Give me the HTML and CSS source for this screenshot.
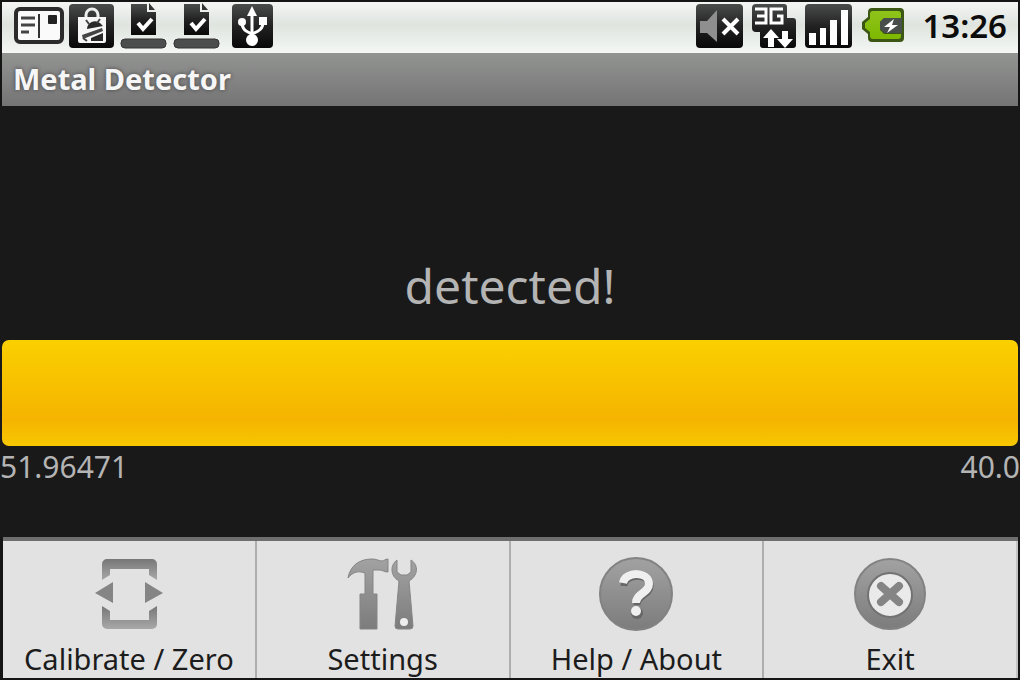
FILE: index.html
```html
<!DOCTYPE html>
<html lang="en">
<head>
    <meta charset="UTF-8">
    <meta name="viewport" content="width=device-width, initial-scale=1.0">
    <title>Metal Detector</title>
    <link rel="stylesheet" href="styles.css">
</head>
<body>
    <!-- shared gradients -->
    <svg class="defs" width="0" height="0" aria-hidden="true">
        <defs>
            <linearGradient id="dark" x1="0" y1="0" x2="0" y2="1">
                <stop offset="0" stop-color="#4a4c4b"/>
                <stop offset="0.5" stop-color="#222"/>
                <stop offset="1" stop-color="#080808"/>
            </linearGradient>
            <linearGradient id="gray" x1="0" y1="0" x2="0" y2="1">
                <stop offset="0" stop-color="#a2a2a2"/>
                <stop offset="1" stop-color="#7c7c7c"/>
            </linearGradient>
            <linearGradient id="frame" x1="0" y1="0" x2="0" y2="1">
                <stop offset="0" stop-color="#777"/>
                <stop offset="1" stop-color="#a8a8a8"/>
            </linearGradient>
            <linearGradient id="green" x1="0" y1="0" x2="0" y2="1">
                <stop offset="0" stop-color="#8fc41c"/>
                <stop offset="1" stop-color="#7eb800"/>
            </linearGradient>
        </defs>
    </svg>

    <header class="status">
        <div class="notifications">
            <svg width="50" height="48" viewBox="0 0 50 48">
                <rect x="2" y="7" width="46" height="33" rx="4" fill="#fafafa" stroke="#2b2b2b" stroke-width="4"/>
                <path d="M25 12v24" stroke="#333" stroke-width="2"/>
                <path d="M7 16h14M7 23h14M7 30h8" stroke="#444" stroke-width="3"/>
                <rect x="34" y="13" width="9" height="9" rx="1" fill="#222"/>
            </svg>
            <svg width="46" height="48" viewBox="0 0 46 48">
                <rect x="0" y="2" width="45" height="44" rx="4" fill="url(#dark)"/>
                <path d="M17 17v-4a6 6 0 0 1 12 0v4" fill="none" stroke="#eee" stroke-width="3"/>
                <path d="M9 15h28v24a2 2 0 0 1-2 2H11a2 2 0 0 1-2-2z" fill="#f6f6f6"/>
                <path d="M13 33l20-7 1 3-20 8z" fill="#444"/>
                <path d="M18 27a8 8 0 0 1 13-6l3 3zM22 36l12-5v8H22z" fill="#2a2a2a"/>
                <path d="M17 18l3 4M31 17l-3 4M14 36l4 3" stroke="#444" stroke-width="2"/>
            </svg>
            <svg width="48" height="48" viewBox="0 0 48 48">
                <path d="M11 2h16v8h9v23H11z" fill="url(#dark)"/>
                <path d="M29 1l6 7h-6z" fill="#333"/>
                <path d="M18 21l5 6 9-10" fill="none" stroke="#fff" stroke-width="4"/>
                <rect x="1" y="37" width="45" height="9" rx="4" fill="#4c4e4d" stroke="#333" stroke-width="1"/>
            </svg>
            <svg width="48" height="48" viewBox="0 0 48 48">
                <path d="M11 2h16v8h9v23H11z" fill="url(#dark)"/>
                <path d="M29 1l6 7h-6z" fill="#333"/>
                <path d="M18 21l5 6 9-10" fill="none" stroke="#fff" stroke-width="4"/>
                <rect x="1" y="37" width="45" height="9" rx="4" fill="#4c4e4d" stroke="#333" stroke-width="1"/>
            </svg>
            <svg class="usb" width="41" height="48" viewBox="0 0 41 48">
                <rect x="0" y="2" width="41" height="44" rx="4" fill="url(#dark)"/>
                <path d="M20 10v30M10 20c0 7 3 9 10 12M31 20c0 7-4 9-11 12" fill="none" stroke="#fff" stroke-width="3"/>
                <path d="M20 4l5 10H15z" fill="#fff"/>
                <circle cx="10" cy="20" r="4" fill="#fff"/>
                <rect x="27" y="15" width="8" height="8" fill="#fff"/>
                <circle cx="20" cy="38" r="6" fill="#fff"/>
            </svg>
        </div>
        <div class="system">
            <svg width="47" height="48" viewBox="0 0 47 48">
                <rect x="0" y="2" width="47" height="44" rx="4" fill="url(#dark)"/>
                <path d="M4 19h7L21 8v32L11 31H4z" fill="#8f8f8f"/>
                <path d="M27 17l15 15M42 17L27 32" stroke="#fff" stroke-width="4"/>
            </svg>
            <svg width="46" height="48" viewBox="0 0 46 48">
                <path d="M5 2h28a3 3 0 0 1 3 3v11h6a3 3 0 0 1 3 3v24a3 3 0 0 1-3 3H12a3 3 0 0 1-3-3V30H5a4 4 0 0 1-4-4V6a4 4 0 0 1 4-4z" fill="url(#dark)"/>
                <path d="M4 7h11v14H4M6 14h9M32 7H20v14h11v-7h-5" fill="none" stroke="#fff" stroke-width="3"/>
                <path d="M20 27l8 9h-5v9h-6v-9h-5zM34 46l-8-9h5V29h6v8h5z" fill="#fff"/>
            </svg>
            <svg width="47" height="48" viewBox="0 0 47 48">
                <rect x="0" y="2" width="47" height="44" rx="4" fill="url(#dark)"/>
                <path d="M4 31h7v12H4zM15 26h6v17h-6zM25 18h7v25h-7zM36 8h7v35h-7z" fill="#fff"/>
            </svg>
            <svg width="46" height="48" viewBox="0 0 46 48">
                <path d="M12 6h28a4 4 0 0 1 4 4v26a4 4 0 0 1-4 4H12a4 4 0 0 1-4-4v-4l-6-5v-7l6-5v-5a4 4 0 0 1 4-4z" fill="#3c5714"/>
                <path d="M13 9h25a3 3 0 0 1 3 3v4H24l-4 4v8l4 4h17v2a3 3 0 0 1-3 3H13a3 3 0 0 1-3-3v-4l-5-4v-5l5-4v-5a3 3 0 0 1 3-3z" fill="url(#green)"/>
                <path d="M24 16h18v15H24l-4-4v-7z" fill="#484e49"/>
                <path d="M34 17l-10 8h6l-3 6 11-8h-6z" fill="#fff"/>
            </svg>
            <time>13:26</time>
        </div>
    </header>

    <h1 class="title">Metal Detector</h1>

    <main class="detector">
        <p class="message">detected!</p>
        <progress class="level" aria-label="Field strength" value="40" max="40"></progress>
        <div class="values">
            <span>51.96471</span>
            <span>40.0</span>
        </div>
    </main>

    <nav class="menu">
        <button type="button">
            <svg width="72" height="76" viewBox="0 0 72 76">
                <path d="M9 24V8a5 5 0 0 1 5-5h45a5 5 0 0 1 5 5v16l-8-5v-6H17v6z" fill="url(#frame)"/>
                <path d="M9 50v18a5 5 0 0 0 5 5h45a5 5 0 0 0 5-5V50l-8 5v9H17v-9z" fill="url(#frame)"/>
                <path d="M2 37l18-11v21zM70 37L52 26v21z" fill="#858585"/>
            </svg>
            Calibrate / Zero
        </button>
        <button type="button">
            <svg width="72" height="76" viewBox="0 0 72 76">
                <path d="M1 22C3 10 12 3 25 3c5 0 7 2 10 2 2 0 3-2 6-2v13c-4 0-5-2-9-2h-6v24h4v35H13V38h5V17C10 14 5 17 1 22z" fill="url(#gray)" stroke="#858585"/>
                <path d="M50 4c-7 5-7 16 2 21l-4 45q0 3 3 3h12q3 0 3-3l-4-45c9-5 10-16 2-21v12l-4 3h-6l-4-3z" fill="url(#gray)" stroke="#858585"/>
                <circle cx="57" cy="66" r="4" fill="#eee"/>
            </svg>
            Settings
        </button>
        <button type="button">
            <svg width="76" height="76" viewBox="0 0 76 76">
                <circle cx="38" cy="38" r="36" fill="url(#gray)" stroke="#828282" stroke-width="2"/>
                <path d="M26 30c1-13 26-13 26 0 0 9-13 9-13 19" fill="none" stroke="#666" stroke-width="7"/>
                <path d="M25 27c2-12 26-12 26 1 0 9-13 9-13 19" fill="none" stroke="#efefef" stroke-width="8"/>
                <circle cx="39" cy="57" r="6" fill="#666"/>
                <circle cx="38" cy="55" r="5" fill="#efefef"/>
            </svg>
            Help / About
        </button>
        <button type="button">
            <svg width="76" height="76" viewBox="0 0 76 76">
                <circle cx="38" cy="38" r="35" fill="url(#gray)" stroke="#828282" stroke-width="2"/>
                <circle cx="38" cy="39" r="22" fill="#eaeaea" stroke="#727272" stroke-width="2"/>
                <path d="M29 30l18 16M47 30L29 46" stroke="#858585" stroke-width="8" stroke-linecap="round"/>
            </svg>
            Exit
        </button>
    </nav>
</body>
</html>
```

FILE: styles.css
```css
*{
    margin: 0;
    padding: 0;
    box-sizing: border-box;
}
body{
    display: flex;
    flex-direction: column;
    min-height: 100vh;
    padding: 2px 0;
    background-color: #151515;
    font-family: "Noto Sans", "Open Sans", sans-serif;
    font-size: 29px;
}
svg{
    flex: none;
}
.defs{
    position: absolute;
}
.status{
    display: flex;
    justify-content: space-between;
    align-items: center;
    height: 51px;
    margin: 0 2px;
    padding: 0 11px 4px 12px;
    background: linear-gradient(#f4f6f4, #dfe4df 45%, #f4f7f4);
}
.notifications,
.system{
    display: flex;
    align-items: center;
    gap: 8px;
}
.notifications{
    gap: 5px;
}
.usb{
    margin-left: 6px;
}
.system time{
    margin-left: 8px;
    color: #0c0c0c;
    font-weight: 600;
    font-size: 33px;
}
.title{
    height: 53px;
    margin: 0 2px;
    padding-left: 11px;
    background: linear-gradient(#929492, #747474);
    color: #f6f6f6;
    font-size: 29px;
    line-height: 51px;
    text-shadow: 0 0 4px #444;
}
.detector{
    display: flex;
    flex-direction: column;
    flex: 1;
    justify-content: flex-end;
    padding-bottom: 49px;
    background-color: #191919;
    color: #b4b4b4;
}
.message{
    padding-bottom: 20px;
    font-size: 48px;
    line-height: 68px;
    text-align: center;
}
.level{
    display: block;
    width: auto;
    height: 106px;
    margin: 0 2px;
    border: 0;
    border-radius: 7px;
    overflow: hidden;
    appearance: none;
    -webkit-appearance: none;
}
.level::-webkit-progress-bar{
    background: #333;
}
.level::-webkit-progress-value{
    background: linear-gradient(#fad000, #f5b400 75%, #f7c800);
}
.values{
    display: flex;
    justify-content: space-between;
    font-size: 30px;
    line-height: 42px;
}
.menu{
    display: grid;
    grid-template-columns: repeat(4, 1fr);
    margin: 0 2px 0 3px;
    border-top: 4px solid #6e6e6e;
}
.menu button{
    display: flex;
    flex-direction: column;
    align-items: center;
    gap: 9px;
    padding: 15px 0 1px;
    border: 0;
    border-right: 2px solid #aeaeae;
    background-color: #e2e2e2;
    color: #1c1c1c;
    font: inherit;
    line-height: 36px;
}
.menu button:last-child{
    border-right-color: #c4c4c4;
}
```
